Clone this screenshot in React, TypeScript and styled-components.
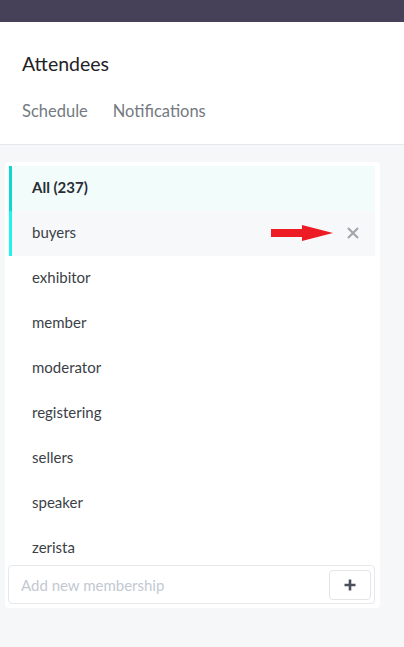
import React, { useState } from 'react'
import styled, { createGlobalStyle } from 'styled-components'

const GlobalStyle = createGlobalStyle`
    body {
        margin: 0;
        background: #f6f7f9;
        font-family: 'Lato', 'Open Sans', sans-serif;
        color: #33363d;
    }
`

const memberships = ['buyers', 'exhibitor', 'member', 'moderator', 'registering', 'sellers', 'speaker', 'zerista']

const App: React.FC = () => {
    const [value, setValue] = useState('')

    return (
        <>
            <GlobalStyle />
            <StyledTopBar />
            <StyledHeader>
                <StyledTitle>Attendees</StyledTitle>
                <StyledTabs>
                    <StyledTab>Schedule</StyledTab>
                    <StyledTab>Notifications</StyledTab>
                </StyledTabs>
            </StyledHeader>
            <StyledMain>
                <StyledCard>
                    <StyledList>
                        <StyledRow active={true}>
                            <StyledRowLabel bold={true}>All (237)</StyledRowLabel>
                        </StyledRow>
                        {memberships.map((name, i) => (
                            <StyledRow key={name} hovered={i === 0}>
                                <StyledRowLabel>{name}</StyledRowLabel>
                                {i === 0 ? (
                                    <StyledRowActions>
                                        <svg width="62" height="16" viewBox="0 0 62 16">
                                            <rect x="0" y="4" width="32" height="8" fill="#ed1c24" />
                                            <polygon points="31,0 62,8 31,16" fill="#ed1c24" />
                                        </svg>
                                        <StyledRemove>
                                            <svg width="12" height="12" viewBox="0 0 12 12">
                                                <path d="M1 1 L11 11 M11 1 L1 11" stroke="#a3a7ad" strokeWidth="2.2" strokeLinecap="butt" />
                                            </svg>
                                        </StyledRemove>
                                    </StyledRowActions>
                                ) : null}
                            </StyledRow>
                        ))}
                    </StyledList>
                    <StyledAddBox>
                        <StyledAddInput
                            placeholder={'Add new membership'}
                            value={value}
                            onChange={(e: React.FormEvent<HTMLInputElement>) => setValue(e.currentTarget.value)}
                        />
                        <StyledAddButton>
                            <svg width="12" height="12" viewBox="0 0 12 12">
                                <path d="M6 0.5 V11.5 M0.5 6 H11.5" stroke="#4a4f5c" strokeWidth="2.6" />
                            </svg>
                        </StyledAddButton>
                    </StyledAddBox>
                </StyledCard>
            </StyledMain>
        </>
    )
}

const StyledTopBar = styled.div`
    height: 22px;
    background: #474059;
`

const StyledHeader = styled.div`
    background: #ffffff;
    height: 123px;
    padding: 0 22px;
    border-bottom: 1px solid #e6e8eb;
    box-sizing: border-box;
    display: flex;
    flex-direction: column;
`

const StyledTitle = styled.div`
    margin-top: 30px;
    font-size: 19.5px;
    line-height: 24px;
    color: #1f2126;
`

const StyledTabs = styled.div`
    display: flex;
    gap: 25px;
    margin-top: 25px;
`

const StyledTab = styled.div`
    font-size: 16.5px;
    line-height: 20px;
    color: #747a82;
`

const StyledMain = styled.div`
    padding: 17px 24px 40px 5px;
`

const StyledCard = styled.div`
    width: 375px;
    box-sizing: border-box;
    background: #ffffff;
    border-radius: 4px;
    padding: 4px 5px 4px 4px;
    display: flex;
    flex-direction: column;
`

const StyledList = styled.div`
    height: 399px;
    overflow: hidden;
`

interface StyledRowProps {
    active?: boolean
    hovered?: boolean
}

const StyledRow = styled.div<StyledRowProps>`
    display: flex;
    align-items: center;
    justify-content: space-between;
    height: 45px;
    box-sizing: border-box;
    padding: 0 16px 3px 20px;
    border-left: 3px solid ${(props) => props.active ? '#0bd9d2' : props.hovered ? '#1ef3ef' : 'transparent'};
    background: ${(props) => props.active ? '#f2fcfb' : props.hovered ? '#f7f8fa' : 'transparent'};
`

interface StyledRowLabelProps {
    bold?: boolean
}

const StyledRowLabel = styled.span<StyledRowLabelProps>`
    font-size: 15px;
    font-weight: ${(props) => props.bold ? 700 : 400};
    color: ${(props) => props.bold ? '#2a2d33' : '#3b3f47'};
`

const StyledRowActions = styled.div`
    display: flex;
    align-items: center;
    gap: 14px;
    margin-top: 1px;
`

const StyledRemove = styled.div`
    display: flex;
    align-items: center;
`

const StyledAddBox = styled.div`
    margin: 0 0 0 -1px;
    height: 39px;
    box-sizing: border-box;
    border: 1px solid #e6e8eb;
    border-radius: 4px;
    display: flex;
    align-items: center;
    padding: 0 3px 0 12px;
`

const StyledAddInput = styled.input`
    flex: 1;
    border: none;
    outline: none;
    background: transparent;
    font-family: 'Lato', 'Open Sans', sans-serif;
    font-size: 15px;
    color: #3b3f47;
    padding: 0;

    &::placeholder {
        color: #c3c9d2;
    }
`

const StyledAddButton = styled.button`
    width: 42px;
    height: 30px;
    background: #ffffff;
    border: 1px solid #e3e5e8;
    border-radius: 4px;
    display: flex;
    align-items: center;
    justify-content: center;
    padding: 0;
`

export default App
